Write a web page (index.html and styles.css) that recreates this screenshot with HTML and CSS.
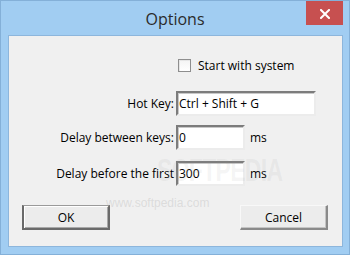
FILE: index.html
```html
<!DOCTYPE html>
<html>
<head>
<meta charset="utf-8">
<link rel="stylesheet" href="styles.css">
</head>
<body>
<div class="window">
  <div class="titlebar">
    <span class="title">Options</span>
    <button class="close" aria-label="Close">
      <svg width="10" height="10" viewBox="0 0 10 10"><path d="M1 1 L9 9 M9 1 L1 9" stroke="#fff" stroke-width="2" stroke-linecap="square"/></svg>
    </button>
  </div>
  <div class="client">
    <div class="row check-row">
      <span class="checkbox"></span>
      <span class="check-label">Start with system</span>
    </div>
    <div class="row hotkey-row">
      <span class="label">Hot Key:</span>
      <span class="input wide">Ctrl + Shift + G</span>
    </div>
    <div class="row delay1-row">
      <span class="label">Delay between keys:</span>
      <span class="input short">0</span>
      <span class="unit">ms</span>
    </div>
    <div class="row delay2-row">
      <span class="label">Delay before the first</span>
      <span class="input short">300</span>
      <span class="unit">ms</span>
    </div>
    <div class="buttons">
      <button class="btn default">OK</button>
      <button class="btn">Cancel</button>
    </div>
    <div class="watermark">
      <span class="wm-big">SOFTPEDIA</span>
      <span class="wm-small">www.softpedia.com</span>
    </div>
  </div>
</div>
</body>
</html>
```

FILE: styles.css
```css
* { box-sizing: border-box; }
html, body { margin: 0; padding: 0; }
body {
  font-family: "Open Sans", "Noto Sans", sans-serif;
  font-size: 12px;
  color: #000;
  background: #9fcbf0;
}
.window {
  width: 350px;
  height: 255px;
  background: #a1cdf2;
  border: 1px solid #84b0d8;
  display: flex;
  flex-direction: column;
}
.titlebar {
  position: relative;
  height: 34px;
  display: flex;
  align-items: center;
  justify-content: center;
}
.title {
  font-size: 16px;
  color: #2b2b2b;
  margin-top: 1px;
}
.close {
  position: absolute;
  top: 0;
  right: 6px;
  width: 37px;
  height: 24px;
  border: none;
  padding: 0;
  background: #c75050;
  display: flex;
  align-items: center;
  justify-content: center;
}
.close svg { display: block; margin-top: 1px; }
.client {
  position: relative;
  flex: 1;
  margin: 0 6px 7px 7px;
  background: #f0f0f0;
  border: 1px solid #8db6dc;
  padding-top: 23px;
  display: flex;
  flex-direction: column;
}
.row {
  display: flex;
  align-items: center;
  line-height: 16px;
}
.check-row { padding-left: 169px; height: 13px; }
.checkbox {
  width: 13px;
  height: 13px;
  border: 1px solid #8e8e8e;
  background: linear-gradient(#f4f4f4, #ffffff);
  box-shadow: inset 1px 1px 0 #e6e6e6;
}
.check-label { margin-left: 7px; }
.hotkey-row { margin-top: 19px; }
.delay1-row { margin-top: 9px; }
.delay2-row { margin-top: 11px; }
.label {
  width: 167px;
  padding-right: 2px;
  text-align: right;
  white-space: nowrap;
}
.input {
  height: 25px;
  background: #fff;
  border-style: solid;
  border-width: 2px;
  border-color: #7c7c7c #ececec #ececec #7c7c7c;
  box-shadow: inset 1px 1px 0 #c8c8c8;
  padding: 0 1px;
  display: flex;
  align-items: center;
  white-space: nowrap;
}
.wide { width: 140px; }
.short { width: 69px; }
.unit { margin-left: 5px; }
.buttons {
  margin-top: 19px;
  display: flex;
  justify-content: space-between;
  padding: 0 14px 0 13px;
}
.btn {
  width: 88px;
  height: 25px;
  font: inherit;
  color: #000;
  background: #ececec;
  border-style: solid;
  border-width: 1px 2px 2px 1px;
  border-color: #f8f8f8 #8a8a8a #8a8a8a #f8f8f8;
  box-shadow: inset -1px -1px 0 #c4c4c4;
  padding: 0;
}
.btn.default {
  border-width: 1px 2px 2px 2px;
  border-color: #9a9a9a #6a6a6a #6a6a6a #6a6a6a;
  box-shadow: inset 1px 1px 0 #ffffff, inset -1px -1px 0 #a8a8a8;
}
.watermark {
  position: absolute;
  left: 0;
  top: 0;
  right: 0;
  bottom: 0;
  pointer-events: none;
}
.wm-big {
  position: absolute;
  left: 148px;
  top: 116px;
  font-family: "Liberation Sans", sans-serif;
  font-weight: bold;
  font-size: 32px;
  letter-spacing: -1px;
  transform: scaleX(0.72);
  transform-origin: left top;
  color: rgba(150, 150, 150, 0.1);
}
.wm-small {
  position: absolute;
  left: 97px;
  top: 160px;
  font-family: "Liberation Sans", sans-serif;
  font-size: 12px;
  color: rgba(170, 170, 170, 0.3);
}
```
